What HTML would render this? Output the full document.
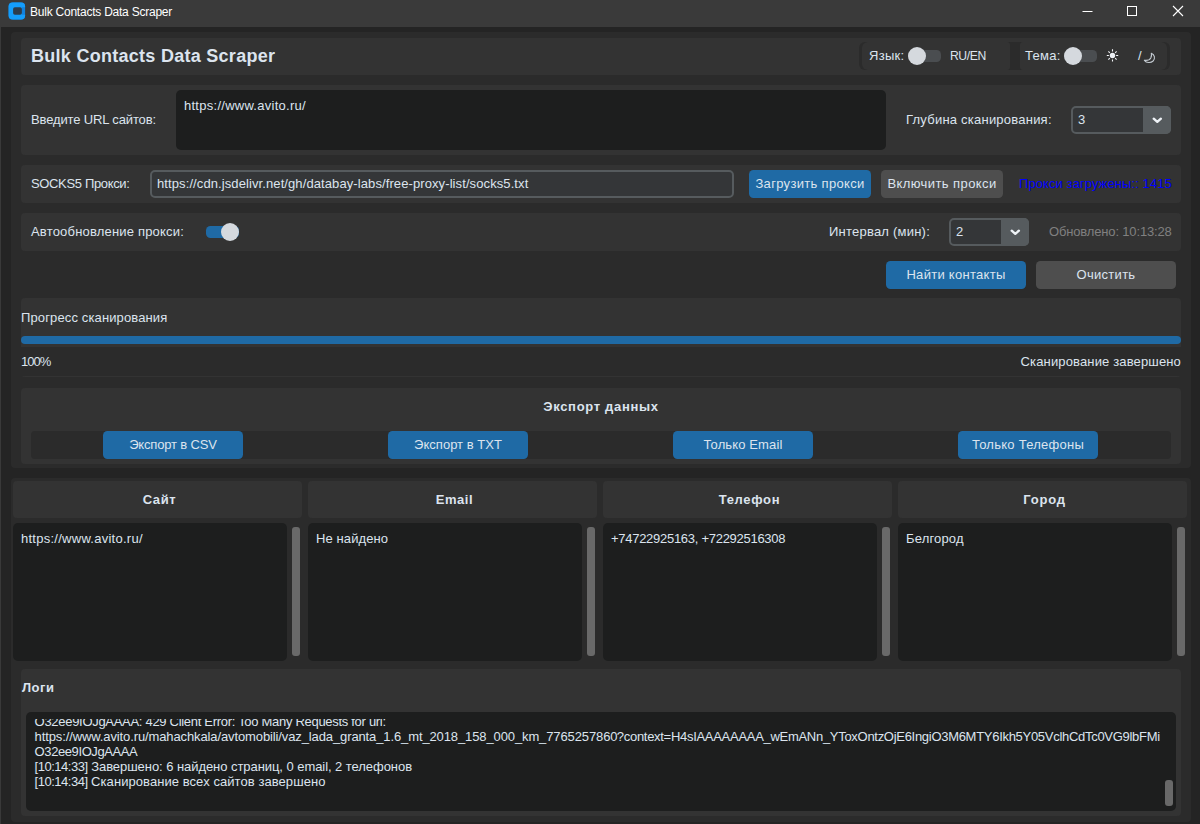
<!DOCTYPE html>
<html lang="ru">
<head>
<meta charset="utf-8">
<title>Bulk Contacts Data Scraper</title>
<style>
html,body{margin:0;padding:0;}
body{width:1200px;height:824px;overflow:hidden;background:#242424;position:relative;
 font-family:"Liberation Sans","DejaVu Sans",sans-serif;font-size:13px;color:#dce4ee;}
.a{position:absolute;box-sizing:border-box;}
.t{position:absolute;white-space:nowrap;line-height:16px;height:16px;}
.b{font-weight:bold;}
.f2{background:#2b2b2b;border-radius:4px;}
.f3{background:#333333;border-radius:4px;}
.tb{background:#1d1e1e;border-radius:5px;}
.btn{background:#1f6aa5;border-radius:4.5px;text-align:center;line-height:28px;height:28px;}
.btn.g{background:#4e4e4e;}
.sb{background:#696969;border-radius:3px;width:8px;}
.ent{background:#343638;border:2px solid #565b5e;border-radius:5px;}
.cbb{background:#565b5e;border-radius:0 5px 5px 0;}
.trk{background:#4a4d50;border-radius:4.5px;height:12px;}
.thm{background:#d5d9de;border-radius:50%;width:18px;height:18px;}
</style>
</head>
<body>
<!-- title bar -->
<div class="a" id="titlebar" style="left:0;top:0;width:1200px;height:27px;background:#3a3a3a;"></div>
<div class="a" style="left:0;top:27px;width:1px;height:797px;background:#393939;"></div>
<!-- main containers -->
<div class="a f2" id="top" style="left:11px;top:31.5px;width:1179.5px;height:436px;"></div>
<div class="a f2" id="bot" style="left:11px;top:478px;width:1179.5px;height:343.5px;"></div>

<!-- titlebar content -->
<svg class="a" style="left:8px;top:2px;" width="18" height="18" viewBox="0 0 18 18">
 <rect x="0.6" y="0.6" width="16.5" height="17" rx="4" fill="#1282de"/>
 <path d="M17.1 5.2 V4.6 Q17.1 0.6 13.1 0.6 H4.6 Q0.6 0.6 0.6 4.6 V13.6 Q0.6 17.6 4.6 17.6 H13.1 Q17.1 17.6 17.1 13.6 V12.8 H14 V5.2 Z" fill="#149dfb"/>
 <rect x="5.1" y="5.3" width="8.8" height="7.4" rx="1.8" fill="#2c3c4c"/>
</svg>
<span class="t" id="wt" style="left:30px;top:4px;font-size:12px;color:#ffffff;letter-spacing:-0.231px;">Bulk Contacts Data Scraper</span>
<svg class="a" style="left:1070px;top:0;" width="130" height="27" viewBox="0 0 130 27">
 <path d="M12.5 11.5 H22.5" stroke="#ffffff" stroke-width="1" fill="none"/>
 <rect x="57.5" y="6.5" width="9" height="9" stroke="#ffffff" stroke-width="1" fill="none"/>
 <path d="M103 6 L113 16 M113 6 L103 16" stroke="#ffffff" stroke-width="1.1" fill="none"/>
</svg>

<!-- header frame -->
<div class="a f3" id="hdr" style="left:21px;top:37.5px;width:1160px;height:37.5px;"></div>
<span class="t b" id="h1" style="left:31px;top:44px;font-size:18px;line-height:24px;height:24px;letter-spacing:0.277px;">Bulk Contacts Data Scraper</span>
<!-- lang / theme sub-frames (subtle edges) -->
<div class="a" style="left:859px;top:42px;width:8px;height:28px;background:#2b2b2b;border-radius:6px 0 0 6px;"></div>
<div class="a" style="left:862px;top:42px;width:10px;height:28px;background:#333333;border-radius:6px 0 0 6px;"></div>
<div class="a" style="left:1008px;top:42px;width:15px;height:28px;background:#2b2b2b;"></div>
<div class="a" style="left:1000px;top:42px;width:10px;height:28px;background:#333333;border-radius:0 3px 3px 0;"></div>
<div class="a" style="left:1020px;top:42px;width:10px;height:28px;background:#333333;border-radius:3px 0 0 3px;"></div>
<div class="a" style="left:1162px;top:42px;width:8px;height:28px;background:#2b2b2b;border-radius:0 6px 6px 0;"></div>
<div class="a" style="left:1157px;top:42px;width:10px;height:28px;background:#333333;border-radius:0 6px 6px 0;"></div>

<span class="t" id="lang" style="left:869px;top:48px;letter-spacing:0.288px;">Язык:</span>
<div class="a trk" style="left:908px;top:50px;width:33px;"></div>
<div class="a thm" style="left:908px;top:47px;"></div>
<span class="t" id="ruen" style="left:950px;top:48px;font-size:12.2px;letter-spacing:-0.433px;">RU/EN</span>

<span class="t" id="theme" style="left:1025px;top:48px;letter-spacing:0.268px;">Тема:</span>
<div class="a trk" style="left:1064px;top:50px;width:33px;"></div>
<div class="a thm" style="left:1064px;top:47px;"></div>
<svg class="a" style="left:1104px;top:46px;" width="18" height="19" viewBox="0 0 18 19">
 <circle cx="8.5" cy="9.5" r="2.7" fill="#eef1f5"/>
 <path d="M8.5 3.2 V5.6 M8.5 13.4 V15.6 M2.8 9.5 H4.9 M12.1 9.5 H14.2 M5.8 6.8 L4.4 5.4 M5.8 12.2 L4.4 13.6 M11.2 6.8 L12.6 5.4 M11.2 12.2 L12.6 13.6" stroke="#f4f6f9" stroke-width="1.1" fill="none"/>
</svg>
<span class="t" id="slash" style="left:1138px;top:48px;">/</span>
<svg class="a" style="left:1142px;top:47px;" width="16" height="18" viewBox="0 0 16 18">
 <path d="M9.3 6.2 C12.6 7.4 13.6 11.4 11.1 14 C8.6 16.4 4.4 15.9 2.4 13.3 C5.4 13.7 7.7 12.9 8.8 10.9 C9.6 9.3 9.7 7.7 9.3 6.2 Z" fill="none" stroke="#c3cad1" stroke-width="1.1" stroke-linejoin="round"/>
</svg>

<!-- URL row -->
<div class="a f3" id="urlrow" style="left:21px;top:85px;width:1160px;height:70px;"></div>
<span class="t" id="l_url" style="left:31px;top:112px;letter-spacing:-0.137px;">Введите URL сайтов:</span>
<div class="a tb" id="urlbox" style="left:176px;top:90px;width:710px;height:60px;"></div>
<span class="t" id="t_url" style="left:184px;top:98px;letter-spacing:0.264px;">https://www.avito.ru/</span>
<span class="t" id="l_depth" style="left:906px;top:112px;letter-spacing:0.227px;">Глубина сканирования:</span>
<div class="a ent" style="left:1071px;top:106px;width:100px;height:28px;"></div>
<div class="a cbb" style="left:1143px;top:106px;width:28px;height:28px;"></div>
<span class="t" id="cb1" style="left:1078px;top:112px;">3</span>
<svg class="a" style="left:1143px;top:106px;" width="28" height="28" viewBox="0 0 28 28"><path d="M10.7 12.7 L14.3 15.8 L17.9 12.7" fill="none" stroke="#eef2f6" stroke-width="2.4" stroke-linecap="round" stroke-linejoin="round"/></svg>

<!-- proxy row -->
<div class="a f3" id="proxyrow" style="left:21px;top:165px;width:1160px;height:38px;"></div>
<span class="t" id="l_socks" style="left:31px;top:176px;letter-spacing:-0.351px;">SOCKS5 Прокси:</span>
<div class="a ent" style="left:150px;top:170px;width:584px;height:28px;"></div>
<span class="t" id="t_proxy" style="left:157px;top:176px;letter-spacing:0.097px;">https://cdn.jsdelivr.net/gh/databay-labs/free-proxy-list/socks5.txt</span>
<div class="a btn" style="left:749px;top:170px;width:122px;"><span id="b_load" style="letter-spacing:0.315px;">Загрузить прокси</span></div>
<div class="a btn g" style="left:881px;top:170px;width:122px;"><span id="b_on" style="letter-spacing:0.413px;">Включить прокси</span></div>
<span class="t" id="l_loaded" style="left:1019px;top:176px;color:#0000ff;letter-spacing:0.087px;">Прокси загружены:: 1415</span>

<!-- auto-update row -->
<div class="a f3" id="autorow" style="left:21px;top:213px;width:1160px;height:38px;"></div>
<span class="t" id="l_auto" style="left:31px;top:224px;letter-spacing:0.189px;">Автообновление прокси:</span>
<div class="a trk" style="left:206px;top:226px;width:33px;background:#1f6aa5;"></div>
<div class="a thm" style="left:221px;top:223px;"></div>
<span class="t" id="l_int" style="left:829px;top:224px;letter-spacing:0.226px;">Интервал (мин):</span>
<div class="a ent" style="left:949px;top:218px;width:80px;height:28px;"></div>
<div class="a cbb" style="left:1001px;top:218px;width:28px;height:28px;"></div>
<span class="t" id="cb2" style="left:956px;top:224px;">2</span>
<svg class="a" style="left:1001px;top:218px;" width="28" height="28" viewBox="0 0 28 28"><path d="M10.7 12.7 L14.3 15.8 L17.9 12.7" fill="none" stroke="#eef2f6" stroke-width="2.4" stroke-linecap="round" stroke-linejoin="round"/></svg>
<span class="t" id="l_upd" style="left:1049px;top:224px;color:#808080;letter-spacing:-0.158px;">Обновлено: 10:13:28</span>

<!-- action buttons -->
<div class="a btn" style="left:886px;top:261px;width:140px;"><span id="b_find" style="letter-spacing:0.282px;">Найти контакты</span></div>
<div class="a btn g" style="left:1036px;top:261px;width:140px;"><span id="b_clear" style="letter-spacing:0.285px;">Очистить</span></div>

<!-- progress -->
<div class="a f3" id="progrow" style="left:21px;top:298px;width:1160px;height:79px;"></div>
<div class="a" style="left:21px;top:347px;width:1160px;height:29px;background:#2b2b2b;"></div>
<span class="t" id="l_prog" style="left:21px;top:310px;letter-spacing:0.130px;">Прогресс сканирования</span>
<div class="a" style="left:21px;top:336px;width:1160px;height:8px;border-radius:4px;background:#1f6aa5;"></div>
<span class="t" id="l_pct" style="left:21px;top:354px;letter-spacing:-0.987px;">100%</span>
<span class="t" id="l_done" style="right:19px;top:354px;letter-spacing:0.145px;">Сканирование завершено</span>

<!-- export -->
<div class="a f3" id="exprow" style="left:21px;top:388px;width:1160px;height:76px;"></div>
<span class="t b" id="l_exp" style="left:501px;width:200px;text-align:center;top:399px;letter-spacing:0.686px;">Экспорт данных</span>
<div class="a f2" style="left:31px;top:431px;width:1140px;height:28px;"></div>
<div class="a btn" style="left:103px;top:431px;width:140px;"><span id="b_csv" style="letter-spacing:-0.160px;">Экспорт в CSV</span></div>
<div class="a btn" style="left:388px;top:431px;width:140px;"><span id="b_txt" style="letter-spacing:0.022px;">Экспорт в TXT</span></div>
<div class="a btn" style="left:673px;top:431px;width:140px;"><span id="b_em" style="letter-spacing:0.125px;">Только Email</span></div>
<div class="a btn" style="left:958px;top:431px;width:140px;"><span id="b_ph" style="letter-spacing:0.259px;">Только Телефоны</span></div>

<!-- table -->
<div class="a f3" style="left:13px;top:481px;width:289px;height:37px;"></div>
<span class="t b" id="h_c1" style="left:15px;width:289px;text-align:center;top:492px;letter-spacing:0.621px;">Сайт</span>
<div class="a tb" style="left:13px;top:522.5px;width:274px;height:138px;"></div>
<span class="t" id="v_c1" style="left:21px;top:531px;letter-spacing:0.259px;">https://www.avito.ru/</span>
<div class="a sb" style="left:292px;top:527px;height:129px;"></div>
<div class="a f3" style="left:308px;top:481px;width:289px;height:37px;"></div>
<span class="t b" id="h_c2" style="left:310px;width:289px;text-align:center;top:492px;letter-spacing:0.528px;">Email</span>
<div class="a tb" style="left:308px;top:522.5px;width:274px;height:138px;"></div>
<span class="t" id="v_c2" style="left:316px;top:531px;letter-spacing:0.107px;">Не найдено</span>
<div class="a sb" style="left:587px;top:527px;height:129px;"></div>
<div class="a f3" style="left:603px;top:481px;width:289px;height:37px;"></div>
<span class="t b" id="h_c3" style="left:605px;width:289px;text-align:center;top:492px;letter-spacing:0.659px;">Телефон</span>
<div class="a tb" style="left:603px;top:522.5px;width:274px;height:138px;"></div>
<span class="t" id="v_c3" style="left:611px;top:531px;letter-spacing:-0.279px;">+74722925163, +72292516308</span>
<div class="a sb" style="left:882px;top:527px;height:129px;"></div>
<div class="a f3" style="left:898px;top:481px;width:289px;height:37px;"></div>
<span class="t b" id="h_c4" style="left:900px;width:289px;text-align:center;top:492px;letter-spacing:0.793px;">Город</span>
<div class="a tb" style="left:898px;top:522.5px;width:274px;height:138px;"></div>
<span class="t" id="v_c4" style="left:906px;top:531px;letter-spacing:0.161px;">Белгород</span>
<div class="a sb" style="left:1177px;top:527px;height:129px;"></div>

<!-- logs -->
<div class="a f3" id="logrow" style="left:21px;top:669px;width:1160px;height:147px;"></div>
<span class="t b" id="l_logs" style="left:22px;top:680px;letter-spacing:0.5px;">Логи</span>
<div class="a tb" id="logbox" style="left:26px;top:712px;width:1150px;height:99px;overflow:hidden;">
 <div class="a" style="left:0;top:7px;width:1150px;height:87px;overflow:hidden;">
  <span class="t" id="g0" style="left:8.6px;top:-5px;line-height:15px;height:15px;letter-spacing:-0.297px;">O32ee9IOJgAAAA: 429 Client Error: Too Many Requests for url:</span>
  <span class="t" id="g1a" style="left:8.6px;top:10px;line-height:15px;height:15px;letter-spacing:-0.115px;">https://www.avito.ru/mahachkala/avtomobili/vaz_lada_granta_1.6_mt_2018_158_000_km_7765257860</span>
  <span class="t" id="g1b" style="left:590.8px;top:10px;line-height:15px;height:15px;letter-spacing:-0.291px;">?context=H4sIAAAAAAAA_wEmANn_YToxOntzOjE6IngiO3M6MTY6Ikh5Y05VclhCdTc0VG9lbFMi</span>
  <span class="t" id="g2" style="left:8.6px;top:25px;line-height:15px;height:15px;letter-spacing:-0.401px;">O32ee9IOJgAAAA</span>
  <span class="t" id="g3a" style="left:8.6px;top:40px;line-height:15px;height:15px;letter-spacing:-0.481px;">[10:14:33]</span>
  <span class="t" id="g3b" style="left:65.2px;top:40px;line-height:15px;height:15px;letter-spacing:-0.056px;"> Завершено: 6 найдено страниц, 0 email, 2 телефонов</span>
  <span class="t" id="g4a" style="left:8.6px;top:55px;line-height:15px;height:15px;letter-spacing:-0.481px;">[10:14:34]</span>
  <span class="t" id="g4b" style="left:65.1px;top:55px;line-height:15px;height:15px;letter-spacing:0.067px;"> Сканирование всех сайтов завершено</span>
 </div>
</div>
<div class="a sb" style="left:1165px;top:779.5px;height:26.5px;"></div>
</body>
</html>
